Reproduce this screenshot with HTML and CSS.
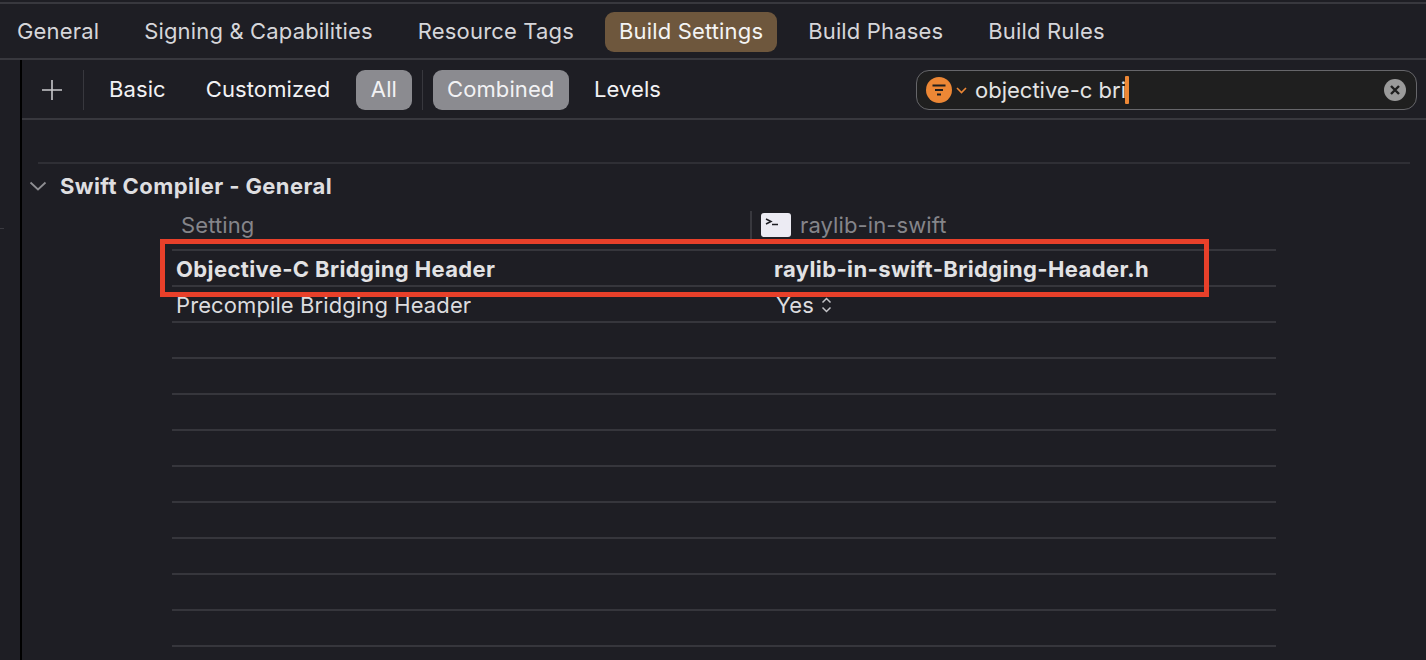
FILE: index.html
```html
<!DOCTYPE html>
<html lang="en">
<head>
<meta charset="utf-8">
<title>Build Settings</title>
<link rel="stylesheet" href="styles.css">
</head>
<body>
<nav class="tabs">
  <span class="tab">General</span>
  <span class="tab">Signing &amp; Capabilities</span>
  <span class="tab">Resource Tags</span>
  <span class="tab active">Build Settings</span>
  <span class="tab">Build Phases</span>
  <span class="tab">Build Rules</span>
</nav>
<div class="main">
  <aside class="rail"><span class="tick"></span></aside>
  <div class="content">
    <div class="toolbar">
      <svg class="plus" width="22" height="22" viewBox="0 0 22 22"><path d="M11 1v20M1 11h20" stroke="#c9c9cc" stroke-width="1.6" fill="none"/></svg>
      <span class="vsep first"></span>
      <span class="seg">Basic</span>
      <span class="seg">Customized</span>
      <span class="seg on all">All</span>
      <span class="vsep"></span>
      <span class="seg on">Combined</span>
      <span class="seg levels">Levels</span>
      <div class="search">
        <svg class="filter" width="26" height="26" viewBox="0 0 26 26"><circle cx="13" cy="13" r="13" fill="#ec8735"/><path d="M6.5 8.500h13M9 13h8M11 17.500h4" stroke="#1e1e1e" stroke-width="2" fill="none"/></svg>
        <svg class="chev" width="11" height="7" viewBox="0 0 11 7"><path d="M1 1l4.500 4.500L10 1" stroke="#ec8735" stroke-width="1.600" fill="none"/></svg>
        <span class="query">objective-c bri</span><span class="caret"></span>
        <svg class="clear" width="22" height="22" viewBox="0 0 22 22"><circle cx="11" cy="11" r="11" fill="#9a9a9a"/><path d="M7 7l8 8M15 7l-8 8" stroke="#1e1e1e" stroke-width="2.400" fill="none"/></svg>
      </div>
    </div>
    <div class="section">
      <div class="section-head">
        <svg width="18" height="10" viewBox="0 0 18 10"><path d="M1.500 1.500L9 8.500l7.500-7" stroke="#8e8e92" stroke-width="1.800" fill="none"/></svg>
        <span>Swift Compiler - General</span>
      </div>
      <div class="table">
        <div class="row head">
          <span class="name">Setting</span>
          <span class="val target">
            <svg class="term" width="30" height="24" viewBox="0 0 30 24"><rect width="30" height="24" rx="3" fill="#ecebf3"/><path d="M5 6l5 2.500L5 11M11 11.500h6" stroke="#1e1e24" stroke-width="1.500" fill="none"/></svg>
            raylib-in-swift
          </span>
        </div>
        <div class="row bold"><span class="name">Objective-C Bridging Header</span><span class="val">raylib-in-swift-Bridging-Header.h</span></div>
        <div class="row"><span class="name">Precompile Bridging Header</span><span class="val yes">Yes
          <svg width="11" height="16" viewBox="0 0 11 16"><path d="M1.500 5.500l4-4 4 4M1.500 10.500l4 4 4-4" stroke="#c4c4c8" stroke-width="1.500" fill="none"/></svg></span></div>
        <div class="row"></div><div class="row"></div><div class="row"></div><div class="row"></div>
        <div class="row"></div><div class="row"></div><div class="row"></div><div class="row"></div>
        <div class="row"></div>
      </div>
    </div>
  </div>
</div>
<div class="highlight"></div>
</body>
</html>
```
FILE: styles.css
```css
* { box-sizing: border-box; }
html, body { margin: 0; height: 660px; overflow: hidden; }
body {
  background: #1e1e24;
  color: #dcdcdf;
  font-family: Inter, "Liberation Sans", sans-serif;
  font-size: 22px;
  letter-spacing: 0.1px;
  padding-top: 2px;
  position: relative;
}
.tabs {
  height: 58px;
  border-top: 2px solid #38383e;
  border-bottom: 2px solid #38383e;
  display: flex;
  align-items: center;
  padding: 2px 0 0 3px;
  gap: 17px;
  letter-spacing: 0.16px;
}
.tab {
  padding: 0 14px;
  height: 40px;
  line-height: 38px;
  border-radius: 9px;
  color: #d6d6da;
}
.tab.active { background: #6e573d; color: #f4f4f4; }
.main { display: flex; height: 600px; }
.rail { width: 22px; border-right: 2px solid #000; position: relative; }
.tick { position: absolute; left: 0; top: 168px; width: 4px; height: 1px; background: #3a3a40; }
.content { flex: 1; }
.toolbar {
  height: 60px;
  border-bottom: 2px solid #38383e;
  display: flex;
  align-items: center;
  padding-top: 2px;
}
.plus { margin-left: 19px; }
.vsep { width: 1px; height: 40px; background: #38383e; margin: 0 10px; }
.vsep.first { margin: 0 5px 0 20px; }
.seg {
  padding: 0 20px;
  height: 40px;
  line-height: 38px;
  color: #f2f2f4;
  border-radius: 9px;
}
.seg.on { background: #8b8b90; padding: 0 14.5px; }
.seg.all { margin-left: 6px; }
.seg.levels { margin-left: 5px; }
.search {
  margin-left: auto;
  margin-right: 9px;
  width: 501px;
  height: 40px;
  border: 1.500px solid #66666a;
  border-radius: 13px;
  background: #1f1f1f;
  display: flex;
  align-items: center;
  padding: 0 10px 0 9px;
}
.chev { margin: 0 0 0 4px; }
.query { margin-left: 8px; color: #e4e4e4; letter-spacing: 0; }
.caret { width: 4px; height: 28px; background: #ec8735; border-radius: 1px; margin-left: -1px; }
.clear { margin-left: auto; }
.section-head {
  margin: 42px 16px 0 16px;
  border-top: 2px solid #2f2f35;
  height: 45px;
  display: flex;
  align-items: center;
  font-weight: 700;
  font-size: 22px;
  letter-spacing: 0.4px;
  color: #dedee0;
  padding-top: 1px;
}
.section-head svg { margin-right: 13px; margin-left: -9px; }
.table { margin-left: 150px; width: 1104px; }
.row {
  height: 36px;
  border-bottom: 2px solid #36363c;
  display: flex;
  align-items: center;
  padding-top: 1px;
}
.row.head { height: 44px; padding: 0 0 6px; color: #85858a; }
.name { width: 602px; padding-left: 4px; }
.row.head .name { padding-left: 9px; }
.val { display: inline-flex; align-items: center; gap: 9px; }
.row.bold { font-weight: 700; letter-spacing: 0.38px; color: #e2e2e4; }
.target { border-left: 2px solid #38383e; height: 28px; padding-left: 9px; margin-left: -24px; }
.yes { margin-left: 2px; gap: 7px; }
.highlight {
  position: absolute;
  left: 160px;
  top: 239px;
  width: 1049px;
  height: 58px;
  border: 5px solid #e8402a;
}
```
